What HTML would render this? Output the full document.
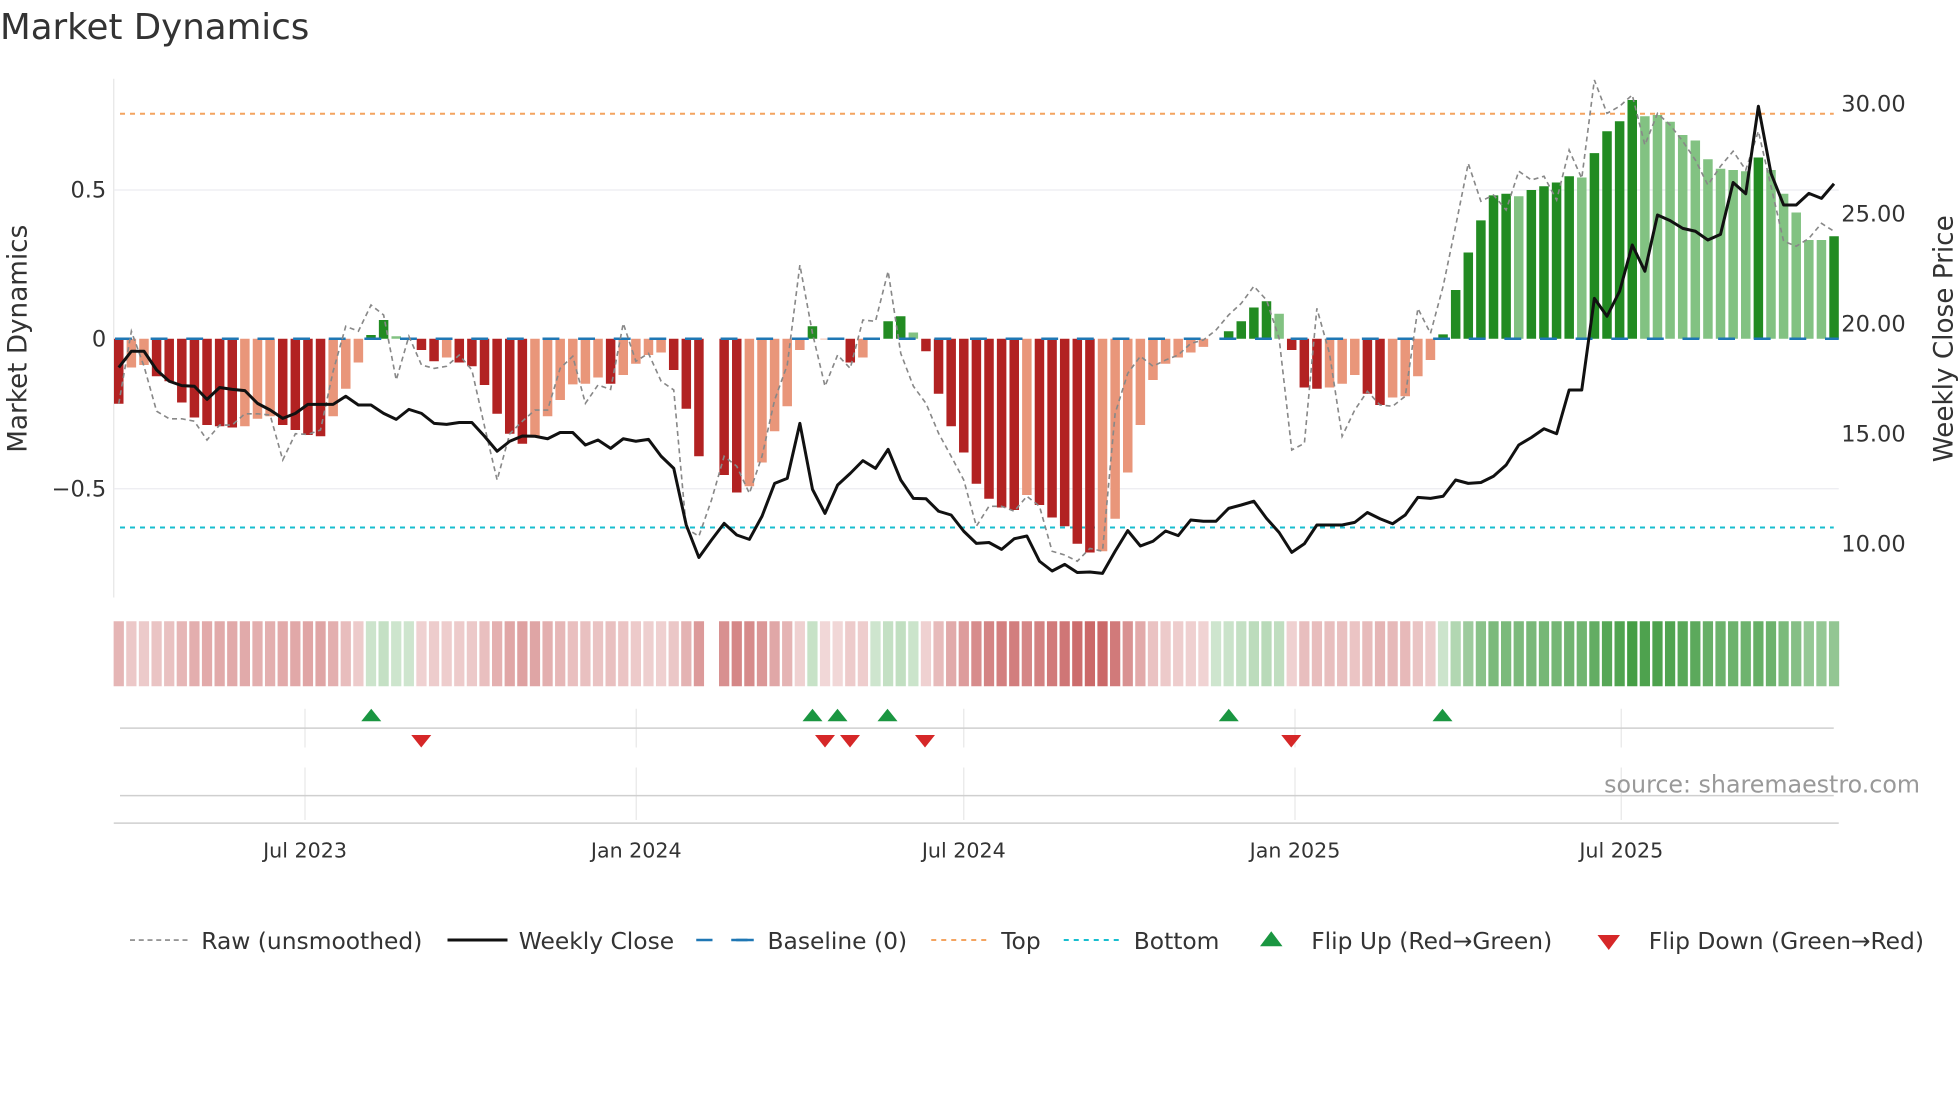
<!DOCTYPE html>
<html><head><meta charset="utf-8"><style>
html,body{margin:0;padding:0;background:#fff;}
svg{display:block;}
text{font-family:"DejaVu Sans","Liberation Sans",sans-serif;}
</style></head><body>
<svg id="s" width="1960" height="1102" viewBox="0 0 1568 881.6" xmlns="http://www.w3.org/2000/svg">
<rect width="1568" height="882" fill="#fff"/>
<text x="0" y="31" font-size="28.5" fill="#333">Market Dynamics</text>
<line x1="91" y1="63" x2="91" y2="478" stroke="#e6e6e6" stroke-width="1"/>
<line x1="91" y1="152" x2="1471" y2="152" stroke="#ececf0" stroke-width="1"/>
<line x1="91" y1="391" x2="1471" y2="391" stroke="#ececf0" stroke-width="1"/>
<line x1="96" y1="91" x2="1467" y2="91" stroke="#f4a460" stroke-width="1.6" stroke-dasharray="4 4"/>
<line x1="96" y1="422" x2="1467" y2="422" stroke="#17becf" stroke-width="1.6" stroke-dasharray="4 4"/>
<g id="bars"></g>
<line x1="91" y1="271" x2="1471" y2="271" stroke="#1f77b4" stroke-width="2" stroke-dasharray="13.5 15" stroke-dashoffset="-1"/>
<polyline id="raw" fill="none" stroke="#888" stroke-width="1.3" stroke-dasharray="4 3"/>
<polyline id="px" fill="none" stroke="#111" stroke-width="2.4" stroke-linejoin="round"/>
<text x="85" y="158" font-size="18" fill="#333" text-anchor="end">0.5</text>
<text x="85" y="277" font-size="18" fill="#333" text-anchor="end">0</text>
<text x="85" y="397" font-size="18" fill="#333" text-anchor="end">−0.5</text>
<text x="1473" y="89" font-size="18" fill="#333">30.00</text>
<text x="1473" y="177" font-size="18" fill="#333">25.00</text>
<text x="1473" y="265" font-size="18" fill="#333">20.00</text>
<text x="1473" y="353" font-size="18" fill="#333">15.00</text>
<text x="1473" y="441" font-size="18" fill="#333">10.00</text>
<text transform="translate(21,271) rotate(-90)" font-size="21" fill="#333" text-anchor="middle">Market Dynamics</text>
<text transform="translate(1562,271) rotate(-90)" font-size="21" fill="#333" text-anchor="middle">Weekly Close Price</text>
<g id="strip"></g>
<g stroke="#e8e8e8" stroke-width="1">
<line x1="244" y1="567" x2="244" y2="598"/><line x1="509" y1="567" x2="509" y2="598"/><line x1="771" y1="567" x2="771" y2="598"/><line x1="1036" y1="567" x2="1036" y2="598"/><line x1="1297" y1="567" x2="1297" y2="598"/>
<line x1="244" y1="614" x2="244" y2="656"/><line x1="509" y1="614" x2="509" y2="656"/><line x1="771" y1="614" x2="771" y2="656"/><line x1="1036" y1="614" x2="1036" y2="656"/><line x1="1297" y1="614" x2="1297" y2="656"/>
</g>
<line x1="96" y1="582.5" x2="1467" y2="582.5" stroke="#cfcfcf" stroke-width="1.2"/>
<line x1="96" y1="636.5" x2="1467" y2="636.5" stroke="#cfcfcf" stroke-width="1.2"/>
<line x1="91" y1="658.5" x2="1471" y2="658.5" stroke="#cfcfcf" stroke-width="1.2"/>
<g fill="#1a9641">
<polygon points="289,577 305,577 297,567"/><polygon points="642,577 658,577 650,567"/><polygon points="662,577 678,577 670,567"/><polygon points="702,577 718,577 710,567"/><polygon points="975,577 991,577 983,567"/><polygon points="1146,577 1162,577 1154,567"/>
</g>
<g fill="#d62728">
<polygon points="329,588 345,588 337,598"/><polygon points="652,588 668,588 660,598"/><polygon points="672,588 688,588 680,598"/><polygon points="732,588 748,588 740,598"/><polygon points="1025,588 1041,588 1033,598"/>
</g>
<text x="1536" y="634" font-size="19" fill="#999" text-anchor="end">source: sharemaestro.com</text>
<g font-size="16.5" fill="#333" text-anchor="middle">
<text x="244" y="686">Jul 2023</text><text x="509" y="686">Jan 2024</text><text x="771" y="686">Jul 2024</text><text x="1036" y="686">Jan 2025</text><text x="1297" y="686">Jul 2025</text>
</g>
<g font-size="18.7" fill="#333">
<line x1="104" y1="752" x2="150" y2="752" stroke="#888" stroke-width="1.3" stroke-dasharray="4 3"/>
<text x="161" y="759">Raw (unsmoothed)</text>
<line x1="358" y1="752" x2="406" y2="752" stroke="#111" stroke-width="2.4"/>
<text x="415" y="759">Weekly Close</text>
<line x1="557" y1="752" x2="603" y2="752" stroke="#1f77b4" stroke-width="2" stroke-dasharray="13 15"/>
<line x1="589" y1="752" x2="603" y2="752" stroke="#1f77b4" stroke-width="2"/>
<text x="614" y="759">Baseline (0)</text>
<line x1="745" y1="752" x2="790" y2="752" stroke="#f4a460" stroke-width="1.6" stroke-dasharray="4 4"/>
<text x="801" y="759">Top</text>
<line x1="851" y1="752" x2="896" y2="752" stroke="#17becf" stroke-width="1.6" stroke-dasharray="4 4"/>
<text x="907" y="759">Bottom</text>
<polygon points="1008,757 1026,757 1017,745" fill="#1a9641"/>
<text x="1049" y="759">Flip Up (Red→Green)</text>
<polygon points="1278,748 1296,748 1287,760" fill="#d62728"/>
<text x="1319" y="759">Flip Down (Green→Red)</text>
</g>
</svg>
<script>
var h=[52,23,21,30,34,51,63,69,70,71,70,64,62,69,73,77,78,62,40,19,-3,-15,-2,0,9,18,15,19,22,37,60,76,84,78,62,49,
36.5,36,31,36,29,20,13,11,25,56,94,null,109,123,118,99,74,54,9,-10,0.5,0,19,15,0,-14,-18,-5,10,44,70,91,116,128,135,137,
125,133,143,150,164,171,170,144,107,69,33,20,15,11,6.5,0,-6,-14,-25,-30,-20,9,39,40,39,36,29,44,53,47,46,30,17,-3.5,-39,-69,
-94.7,-114.7,-116,-114,-119,-122,-125,-130,-129,-148.5,-166,-174,-191,-178,-179,-173.6,-163,-158.6,-143.6,-136,-135,-134,-145,-135,-116,-101,-79,-79,-82];
var c="DLLDDDDDDDLLLDDDDLLLGGggDDLDDDDDDLLL"+"LLLDLLLLDDD_DDLLLLLGLLDLgGGgDDDDDDDD"+"LDDDDDLLLLLLLLLgGGGGgDDDLLLDDLLLLGGG"+"GGGgGGGGgGGGGgggggggggGgggggG";
var p=[294,281,281,296,305,308.5,309,319.5,310,311.5,312.5,322.7,328,334.7,330.7,323.5,323.5,323.5,317,324,324,330.7,335.5,327.5,330.7,338.7,339.5,338,338,349,361,353,348.8,349,351,346,
346,356,352,358.7,351,353,351.5,365,374.7,420,446,432,418.7,428,431.5,413,386.7,382.7,338.7,391.5,410.7,388,378.7,368.5,374.7,359.5,384,398.7,399,409,412,425,434.7,434,439.5,431,
428.8,449,456.8,451.5,458,457.6,458.7,441,424.5,436.8,433,424.8,428.5,416,417,417,406.7,404,401,414.7,426,441.9,435,420,420,420,417.9,410,415,419,412,397.9,398.7,397,384,386.7,
386,381,372,356,350,343,347,312,312,238.7,253,233,196,217,172,176.5,182.7,185,192,187.5,146,155,85,138.7,164,164,154.7,158.7,147];
var r=[323,265,293,329,335,335,337,352,340,340,331,331,332,368,347,347.5,344,297,261,265,244,252,304,269,292,294.7,293,284,296,341,384,347,337,328,328,294.7,
285,322.7,308,311.5,258.7,289,282.7,305,312,422.7,429,400,365,373,394.7,365,320,292,212,266.7,309,284,294.7,256,257,217,282.7,309,322.7,346.7,365,384,421,405,405,409,
397,405,441,444,449,438.7,441,330.7,298.7,285,293,288,284,274.7,272,264,252,242.7,229,240,270.7,360,354.7,246.7,282.7,349,328,313,324,325,317,246.7,266.7,229,181,130.7,
161,156,168,137,144,141,160,120,142.7,64,90.7,85,76,116,90.7,100,113,128,148,133,121,136,105,149,193,197,190.7,178.7,185];
var NS="http://www.w3.org/2000/svg",B=document.getElementById("bars"),S=document.getElementById("strip");
var col={D:"#b22222",L:"#e9967a",G:"#228b22",g:"#82c282"};
function X(i){return 95+i*10.09;}
function mk(g,x,y,w,hh,f){var e=document.createElementNS(NS,"rect");e.setAttribute("x",x);e.setAttribute("y",y);e.setAttribute("width",w);e.setAttribute("height",hh);e.setAttribute("fill",f);g.appendChild(e);}
function mix(rgb,a){return "rgb("+rgb.map(function(v){return Math.round(255-(255-v)*a);}).join(",")+")";}
var pp=[],rp=[];
for(var i=0;i<h.length;i++){
 var x=X(i);
 if(h[i]!==null){
  var v=h[i];
  if(Math.abs(v)>0.2){ if(v>0) mk(B,x-3.8,271,7.6,v,col[c[i]]); else mk(B,x-3.8,271+v,7.6,-v,col[c[i]]); }
  var a,f;
  if(v>0||c[i]=="D"||c[i]=="L"){a=0.18+0.5*Math.min(Math.abs(v)/170,1);f=mix([178,34,34],a);}
  else{a=0.22+0.62*Math.min(Math.abs(v)/190,1);f=mix([34,139,34],a);}
  mk(S,x-4.1,497,8.2,52,f);
 }
 pp.push(x.toFixed(1)+","+p[i]);rp.push(x.toFixed(1)+","+r[i]);
}
document.getElementById("px").setAttribute("points",pp.join(" "));
document.getElementById("raw").setAttribute("points",rp.join(" "));
</script>
</body></html>
